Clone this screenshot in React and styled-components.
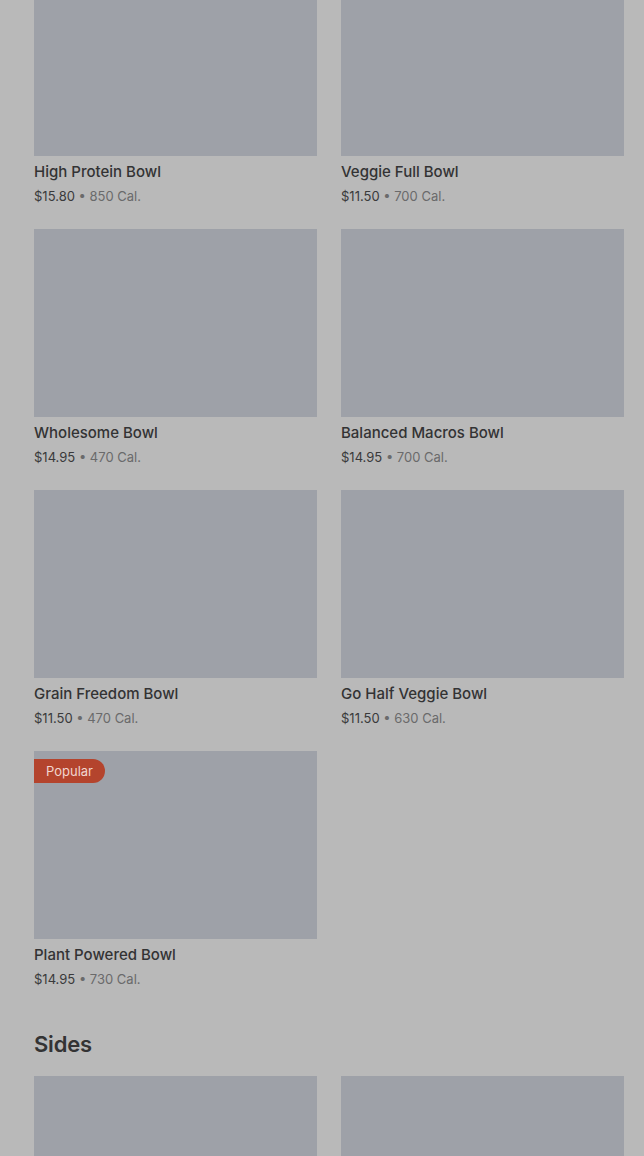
import React from 'react';
import styled, { createGlobalStyle } from 'styled-components';

const GlobalStyle = createGlobalStyle`
  html, body {
    margin: 0;
    padding: 0;
    background: #b9b9b9;
  }
  body {
    font-family: Inter, "Liberation Sans", Arial, sans-serif;
    overflow: hidden;
  }
`;

const Page = styled.main`
  padding: 0 20px 0 34px;
  margin-top: -32px;
`;

const Section = styled.section`
  display: flex;
  flex-direction: column;
`;

const SectionTitle = styled.h2`
  margin: 41px 0 18px;
  font-size: 22px;
  line-height: 28px;
  font-weight: 600;
  color: #333334;
  letter-spacing: -0.2px;
`;

const Grid = styled.div`
  display: grid;
  grid-template-columns: 1fr 1fr;
  column-gap: 24px;
  row-gap: 23px;
`;

const Card = styled.div`
  display: flex;
  flex-direction: column;
`;

const Thumb = styled.div`
  height: 188px;
  background: #9ea1a8;
  position: relative;
`;

const Badge = styled.span`
  position: absolute;
  top: 8px;
  left: 0;
  height: 24px;
  padding: 0 12px;
  display: flex;
  align-items: center;
  background: #b4442d;
  color: #f1d6cf;
  font-size: 13px;
  border-radius: 0 12px 12px 0;
`;

const Name = styled.div`
  margin-top: 5px;
  font-size: 15px;
  line-height: 22px;
  font-weight: 550;
  color: #333334;
`;

const Meta = styled.div`
  margin-top: 3px;
  font-size: 13px;
  line-height: 20px;
  color: #6a6a6b;
`;

const Price = styled.span`
  color: #3a3a3b;
`;

const bowls = [
  { name: 'High Protein Bowl', price: '$15.80', cal: '850 Cal.' },
  { name: 'Veggie Full Bowl', price: '$11.50', cal: '700 Cal.' },
  { name: 'Wholesome Bowl', price: '$14.95', cal: '470 Cal.' },
  { name: 'Balanced Macros Bowl', price: '$14.95', cal: '700 Cal.' },
  { name: 'Grain Freedom Bowl', price: '$11.50', cal: '470 Cal.' },
  { name: 'Go Half Veggie Bowl', price: '$11.50', cal: '630 Cal.' },
  { name: 'Plant Powered Bowl', price: '$14.95', cal: '730 Cal.', badge: 'Popular' },
];

const sides = [{ name: 'Side 1' }, { name: 'Side 2' }];

const MenuCard = ({ item }) => (
  <Card>
    <Thumb>{item.badge && <Badge>{item.badge}</Badge>}</Thumb>
    <Name>{item.name}</Name>
    <Meta>
      <Price>{item.price}</Price> • {item.cal}
    </Meta>
  </Card>
);

const App = () => {
  return (
    <>
      <GlobalStyle />
      <Page>
        <Section>
          <Grid>
            {bowls.map((b) => (
              <MenuCard key={b.name} item={b} />
            ))}
          </Grid>
        </Section>
        <Section>
          <SectionTitle>Sides</SectionTitle>
          <Grid>
            {sides.map((s) => (
              <Card key={s.name}>
                <Thumb />
              </Card>
            ))}
          </Grid>
        </Section>
      </Page>
    </>
  );
};

export default App;
